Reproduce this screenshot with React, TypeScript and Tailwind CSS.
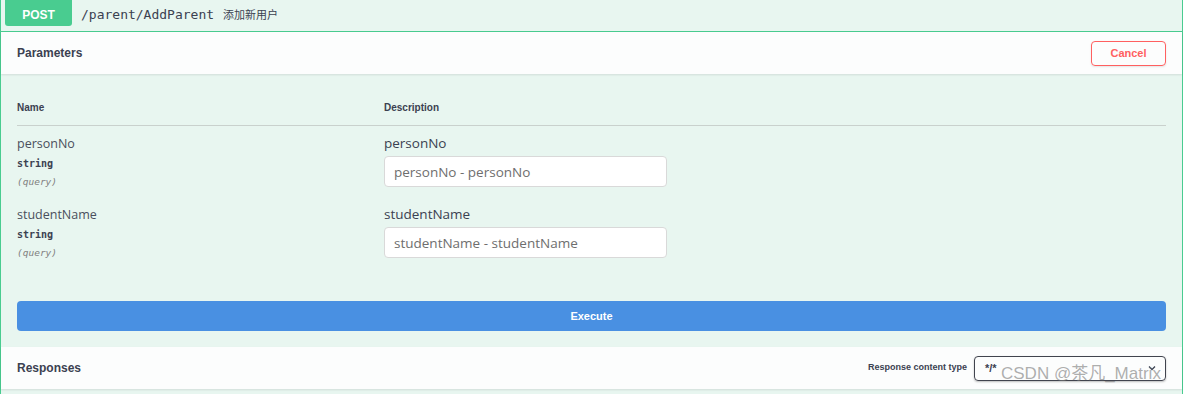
import React from "react";

const params = [
  { name: "personNo", type: "string", loc: "(query)" },
  { name: "studentName", type: "string", loc: "(query)" },
];

const sans = "font-['Open_Sans',sans-serif]";
const head = "font-['Liberation_Sans',sans-serif]";
const mono = "font-['DejaVu_Sans_Mono',monospace]";

const App: React.FC = () => {
  return (
    <div className="w-[1185px] h-[394px] bg-white overflow-hidden">
      <div className="relative w-[1183px] h-[394px] bg-[#e8f6f0] border-x border-[#49cc90]">
        {/* Summary row */}
        <div className="h-[32px] flex items-start px-[4px] gap-[9px] overflow-hidden border-b border-[#49cc90]">
          <div
            className={`${head} -mt-[4px] h-[30px] w-[67px] shrink-0 rounded-[3px] bg-[#49cc90] text-white text-[12px] font-bold flex items-center justify-center pt-[7px]`}
          >
            POST
          </div>
          <div className="flex items-baseline gap-[9px] h-[27px] pt-[5px] text-[#3b4151]">
            <span className={`${mono} text-[13px]`}>/parent/AddParent</span>
            <span className="text-[11px] font-['Noto_Sans_CJK_SC',sans-serif]">添加新用户</span>
          </div>
        </div>

        {/* Parameters header */}
        <div className="h-[42px] bg-[#fcfdfd] shadow-[0_1px_2px_rgba(0,0,0,0.1)] flex items-center justify-between pl-[16px] pr-[16px]">
          <span className={`${head} text-[12px] font-bold text-[#3b4151]`}>Parameters</span>
          <button
            className={`${head} w-[75px] h-[25px] rounded-[4px] border border-[#ff6060] text-[#ff6060] text-[11px] font-bold bg-transparent shadow-[0_1px_2px_rgba(0,0,0,0.1)]`}
          >
            Cancel
          </button>
        </div>

        {/* Parameter table */}
        <div className="pl-[16px] pr-[16px] pt-[27px]">
          <div className={`${head} grid grid-cols-[367px_1fr] text-[10px] font-bold text-[#3b4151] leading-[14px] pb-[10px] border-b border-[#c9d1cd]`}>
            <span>Name</span>
            <span>Description</span>
          </div>
          {params.map((p, i) => (
            <div
              key={p.name}
              className={`grid grid-cols-[367px_1fr] ${i === 0 ? "pt-[8px] pb-[9px]" : "pt-[9px]"}`}
            >
              <div className="flex flex-col">
                <span className={`${sans} text-[12.5px] leading-[19px] text-[#4a4f5c]`}>{p.name}</span>
                <span className={`${mono} mt-[4px] text-[10px] leading-[14px] font-bold text-[#3b4151]`}>{p.type}</span>
                <span className={`${mono} mt-[6px] text-[9.5px] leading-[10px] italic text-[#808080]`}>{p.loc}</span>
              </div>
              <div className="flex flex-col">
                <span className={`${sans} text-[13.5px] leading-[19px] text-[#3b4151]`}>{p.name}</span>
                <input
                  readOnly
                  placeholder={`${p.name} - ${p.name}`}
                  className={`${sans} mt-[3px] w-[283px] h-[31px] rounded-[4px] border border-[#d9d9d9] bg-white px-[9px] text-[13.5px] placeholder:text-[#6e6e6e] outline-none`}
                />
              </div>
            </div>
          ))}
          <div className="pt-[43px] pb-[16px]">
            <button
              className={`${head} w-full h-[30px] rounded-[4px] bg-[#4990e2] text-white text-[11px] font-bold`}
            >
              Execute
            </button>
          </div>
        </div>

        {/* Responses header */}
        <div className="h-[42px] bg-[#fcfdfd] shadow-[0_1px_2px_rgba(0,0,0,0.1)] flex items-center justify-between pl-[16px] pr-[16px]">
          <span className={`${head} text-[12px] font-bold text-[#3b4151]`}>Responses</span>
          <div className="flex items-center gap-[7px]">
            <span className={`${head} text-[9px] font-bold text-[#3b4151]`}>Response content type</span>
            <div className="w-[192px] h-[25px] rounded-[4px] border border-[#41444e] flex items-center justify-between pl-[10px] pr-[8px] shadow-[0_1px_2px_rgba(0,0,0,0.25)]">
              <span className={`${head} text-[11px] font-bold text-[#3b4151]`}>*/*</span>
              <svg width="10" height="10" viewBox="0 0 20 20" className="text-[#3b4151]">
                <path d="M4 7l6 6 6-6" fill="none" stroke="currentColor" strokeWidth="2.5" />
              </svg>
            </div>
          </div>
        </div>

        {/* Watermark */}
        <div className="absolute left-[1000px] top-[362px] text-[17px] leading-[24px] text-[rgba(120,120,120,0.6)] font-['Liberation_Sans','Noto_Sans_CJK_SC',sans-serif] whitespace-nowrap pointer-events-none">
          CSDN @茶凡_Matrix
        </div>
      </div>
    </div>
  );
};

export default App;
